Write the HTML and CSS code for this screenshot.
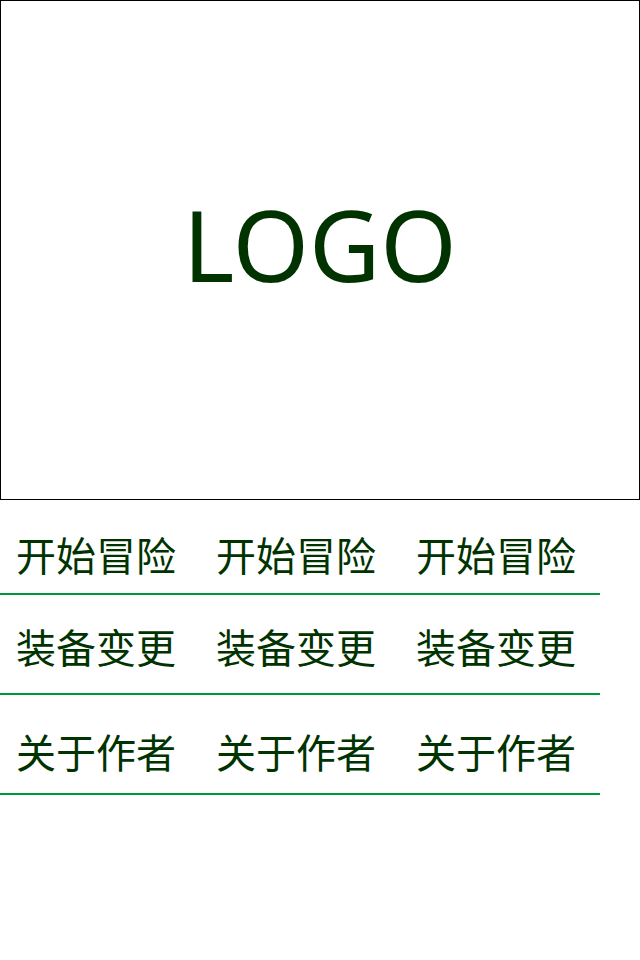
FILE: index.html
```html
<!DOCTYPE html>
<html>
<head>
    <meta charset="utf-8">
    <title>菜单</title>
    <link rel="stylesheet" href="styles.css">
</head>
<body>
    <div class="logo-box">
        <span class="logo">LOGO</span>
    </div>

    <div class="menu">
        <div class="menu-row row-start">
            <a class="menu-item">开始冒险</a>
            <a class="menu-item">开始冒险</a>
            <a class="menu-item">开始冒险</a>
        </div>
        <div class="menu-row row-equip">
            <a class="menu-item">装备变更</a>
            <a class="menu-item">装备变更</a>
            <a class="menu-item">装备变更</a>
        </div>
        <div class="menu-row row-about">
            <a class="menu-item">关于作者</a>
            <a class="menu-item">关于作者</a>
            <a class="menu-item">关于作者</a>
        </div>
    </div>
</body>
</html>
```

FILE: styles.css
```css
body {
    margin: 0;
    background: #fff;
    font-family: "Noto Sans", "Noto Sans CJK SC", sans-serif;
    color: #003300;
}
.logo-box {
    box-sizing: border-box;
    width: 640px;
    height: 500px;
    border: 1px solid #000;
    display: flex;
    align-items: center;
    justify-content: center;
}
.logo {
    font-size: 98px;
    line-height: 1;
    margin-top: -12px;
}
.menu {
    width: 600px;
}
.menu-row {
    display: flex;
    border-bottom: 2px solid #00963c;
    box-sizing: border-box;
}
.menu-item {
    width: 200px;
    padding-left: 16px;
    box-sizing: border-box;
    font-family: "Noto Sans CJK SC", sans-serif;
    font-size: 40px;
    line-height: 40px;
    color: #003300;
}
.row-start {
    height: 95px;
    padding-top: 34px;
}
.row-equip {
    height: 100px;
    padding-top: 31px;
}
.row-about {
    height: 100px;
    padding-top: 36px;
}
```
